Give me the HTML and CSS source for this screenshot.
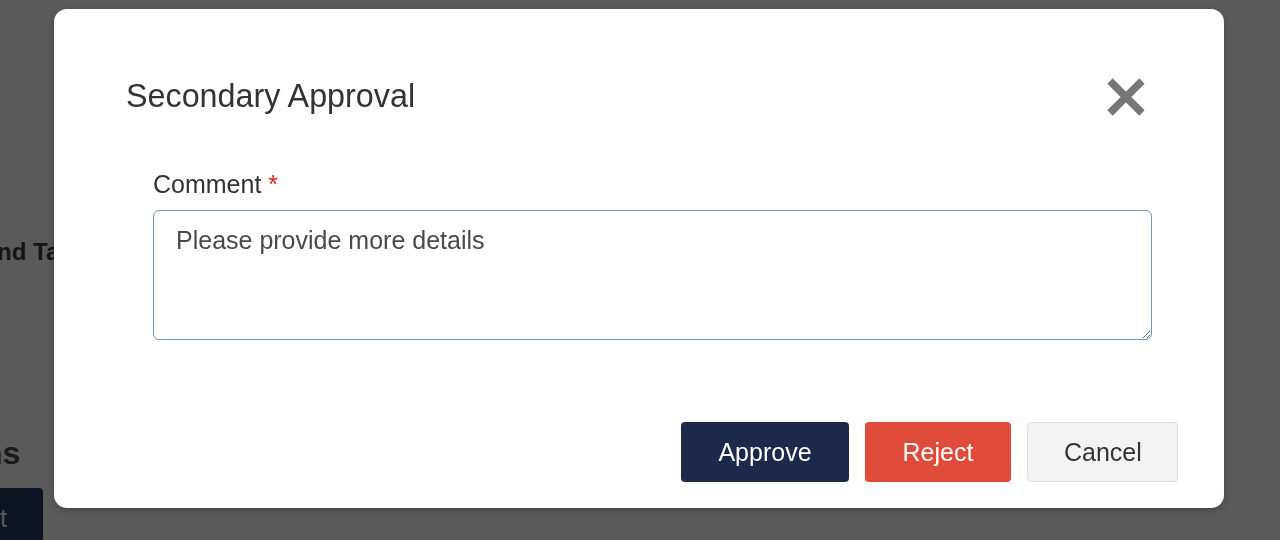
FILE: index.html
```html
<!DOCTYPE html>
<html>
<head>
<meta charset="utf-8">
<link rel="stylesheet" href="styles.css">
</head>
<body>
<div class="page">
  <div class="page-heading">Land Tax</div>
  <div class="page-sub">Actions</div>
  <div class="page-btn">Submit</div>
</div>
<div class="overlay">
  <div class="modal">
    <div class="modal-header">
      <h2 class="modal-title">Secondary Approval</h2>
      <button class="close" aria-label="Close">
        <svg width="40" height="40" viewBox="0 0 40 40"><path d="M4 4 L36 36 M36 4 L4 36" stroke="#777" stroke-width="7.5" stroke-linecap="butt"/></svg>
      </button>
    </div>
    <div class="modal-body">
      <label class="label">Comment <span class="req">*</span></label>
      <textarea class="comment">Please provide more details</textarea>
    </div>
    <div class="modal-footer">
      <button class="btn btn-approve">Approve</button>
      <button class="btn btn-reject">Reject</button>
      <button class="btn btn-cancel">Cancel</button>
    </div>
  </div>
</div>
</body>
</html>
```
FILE: styles.css
```css
html, body {
  margin: 0;
  padding: 0;
  height: 100%;
  overflow: hidden;
}
body {
  background: #5a5a5a;
  font-family: "Liberation Sans", Arial, sans-serif;
}
.page {
  padding-top: 236px;
  color: #141414;
}
.page-heading {
  margin-left: -31px;
  font-size: 24px;
  font-weight: bold;
  line-height: 32px;
}
.page-sub {
  margin-top: 165px;
  margin-left: -97px;
  font-size: 32px;
  font-weight: bold;
  line-height: 40px;
  color: #1a1a1a;
}
.page-btn {
  margin-top: 15px;
  width: 43px;
  height: 60px;
  background: #0c1424;
  border-radius: 0 4px 4px 0;
  color: #5a5a5a;
  font-size: 25px;
  line-height: 60px;
  box-sizing: border-box;
  padding-right: 36px;
  display: flex;
  justify-content: flex-end;
  white-space: nowrap;
  overflow: hidden;
}
.overlay {
  position: fixed;
  inset: 0;
}
.modal {
  position: absolute;
  left: 54px;
  top: 9px;
  width: 1170px;
  height: 499px;
  background: #fff;
  border-radius: 13px;
  box-shadow: 0 2px 6px rgba(0,0,0,0.25);
  box-sizing: border-box;
  padding: 67px 46px 0 72px;
  display: flex;
  flex-direction: column;
}
.modal-header {
  display: flex;
  align-items: center;
  justify-content: space-between;
  height: 40px;
  padding-right: 32px;
}
.modal-title {
  margin: 0;
  font-size: 32.3px;
  font-weight: normal;
  color: #333;
  line-height: 40px;
}
.close {
  background: none;
  border: 0;
  padding: 0;
  width: 40px;
  height: 40px;
  display: flex;
  margin-top: 2px;
}
.modal-body {
  padding: 53px 26px 0 27px;
  display: flex;
  flex-direction: column;
}
.label {
  font-size: 25px;
  color: #333;
  line-height: 30px;
}
.req {
  color: #e0201c;
}
.comment {
  margin-top: 11px;
  height: 130px;
  box-sizing: border-box;
  border: 1px solid #6f9db3;
  border-radius: 6px;
  padding: 14px 22px;
  font-family: "Liberation Sans", Arial, sans-serif;
  font-size: 25px;
  line-height: 30px;
  color: #4a4a4a;
  resize: vertical;
  outline: none;
}
.modal-footer {
  margin-top: 82px;
  display: flex;
  justify-content: flex-end;
  gap: 16px;
}
.btn {
  height: 60px;
  padding: 0 36px;
  font-family: "Liberation Sans", Arial, sans-serif;
  font-size: 25px;
  border-radius: 4px;
  border: 1px solid transparent;
}
.btn-approve {
  background: #1b2a4b;
  color: #fff;
  width: 168px;
}
.btn-reject {
  background: #e04a38;
  color: #fff;
  width: 146px;
}
.btn-cancel {
  background: #f3f3f3;
  border-color: #dedede;
  color: #333;
  width: 151px;
}
```
